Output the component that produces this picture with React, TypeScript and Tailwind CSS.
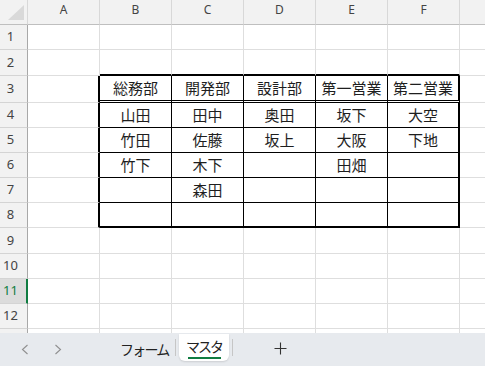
import { Fragment } from 'react'

const columns = ['A', 'B', 'C', 'D', 'E', 'F']
const tableColumns = ['B', 'C', 'D', 'E', 'F']

// master table rows (B..F)
const tableData: Record<number, string[]> = {
  3: ['総務部', '開発部', '設計部', '第一営業', '第二営業'],
  4: ['山田', '田中', '奥田', '坂下', '大空'],
  5: ['竹田', '佐藤', '坂上', '大阪', '下地'],
  6: ['竹下', '木下', '', '田畑', ''],
  7: ['', '森田', '', '', ''],
  8: ['', '', '', '', ''],
}

const rows = [
  { n: 1, h: 'h-[25px]' },
  { n: 2, h: 'h-[26px]' },
  { n: 3, h: 'h-[27px]' },
  { n: 4, h: 'h-[25px]' },
  { n: 5, h: 'h-[25px]' },
  { n: 6, h: 'h-[25px]' },
  { n: 7, h: 'h-[25px]' },
  { n: 8, h: 'h-[25px]' },
  { n: 9, h: 'h-[26px]' },
  { n: 10, h: 'h-[25px]' },
  { n: 11, h: 'h-[25px]' },
  { n: 12, h: 'h-[25px]' },
]

const SELECTED_ROW = 11

function rightBorder(row: number, col: string) {
  const inTable = row >= 3 && row <= 8
  if (inTable && (col === 'A' || col === 'F')) return 'border-r-2 border-r-black'
  if (inTable) return 'border-r border-r-black'
  return 'border-r border-r-[#dedede]'
}

function bottomBorder(row: number, col: string) {
  const tableCol = tableColumns.includes(col)
  if (tableCol && (row === 2 || row === 8)) return 'border-b-2 border-b-black'
  if (tableCol && row === 3) return 'border-b-[3px] border-b-black [border-bottom-style:double]!'
  if (tableCol && row > 3 && row < 8) return 'border-b border-b-black'
  return 'border-b border-b-[#dedede]'
}

function cellText(row: number, col: string) {
  const data = tableData[row]
  if (!data) return ''
  const idx = tableColumns.indexOf(col)
  return idx >= 0 ? data[idx] : ''
}

function Chevron({ dir }: { dir: 'left' | 'right' }) {
  return (
    <svg width="8" height="11" viewBox="0 0 8 11" fill="none">
      <path
        d={dir === 'left' ? 'M6.5 1 L1.5 5.5 L6.5 10' : 'M1.5 1 L6.5 5.5 L1.5 10'}
        stroke="#8f8f8f"
        strokeWidth="1.1"
      />
    </svg>
  )
}

function App() {
  return (
    <div className="flex h-[366px] w-[485px] flex-col overflow-hidden bg-white font-['Noto_Sans','Noto_Sans_CJK_JP',sans-serif]">
      {/* column headers */}
      <div className="flex h-[25px] shrink-0">
        <div className="w-[28px] shrink-0 border-r border-b border-r-[#d8d8d8] border-b-[#bfbfbf] bg-[#f2f2f2]">
          <svg width="27" height="24" viewBox="0 0 27 24">
            <polygon points="24,5 24,20 8,20" fill="#d9d9d9" />
          </svg>
        </div>
        {columns.map((col) => (
          <div
            key={col}
            className="flex w-[72px] shrink-0 items-center justify-center border-r border-b border-r-[#d8d8d8] border-b-[#bfbfbf] bg-[#f2f2f2] pb-[5px] text-[12px] text-[#444]"
          >
            {col}
          </div>
        ))}
        <div className="flex-1 border-b border-b-[#bfbfbf] bg-[#f2f2f2]" />
      </div>

      {rows.map(({ n, h }) => (
        <div key={n} className={`flex shrink-0 ${h}`}>
          <div
            className={
              n === SELECTED_ROW
                ? 'flex w-[28px] shrink-0 items-center justify-center border-r-2 border-b border-r-[#107c41] border-b-[#d4d4d4] bg-[#dcdcdc] pr-[5px] text-[13px] text-[#107c41]'
                : 'flex w-[28px] shrink-0 items-center justify-center border-r border-b border-r-[#a8a8a8] border-b-[#d4d4d4] bg-[#f2f2f2] pr-[6px] text-[13px] text-[#444]'
            }
          >
            {n}
          </div>
          {columns.map((col) => (
            <Fragment key={col}>
              <div
                className={`flex w-[72px] shrink-0 items-center justify-center text-[15px] text-[#1e1e1e] font-['Noto_Sans_CJK_JP',sans-serif] ${rightBorder(n, col)} ${bottomBorder(n, col)}`}
              >
                {cellText(n, col)}
              </div>
            </Fragment>
          ))}
          <div className="flex-1 border-b border-b-[#dedede]" />
        </div>
      ))}

      {/* partial row 13 */}
      <div className="flex h-[4px] shrink-0">
        <div className="w-[28px] shrink-0 border-r border-r-[#a8a8a8] bg-[#f2f2f2]" />
        {columns.map((col) => (
          <div key={col} className="w-[72px] shrink-0 border-r border-r-[#dedede]" />
        ))}
      </div>

      {/* sheet tabs */}
      <div className="flex h-[33px] shrink-0 items-start bg-[#e7eaee] font-['Noto_Sans_CJK_JP',sans-serif]">
        <div className="ml-[21px] mt-[11px]">
          <Chevron dir="left" />
        </div>
        <div className="ml-[25px] mt-[11px]">
          <Chevron dir="right" />
        </div>
        <div className="ml-[58px] mt-[6px] w-[42px] whitespace-nowrap text-[14px] tracking-[-1.8px] text-[#222]">フォーム</div>
        <div className="ml-[13px] mt-[6px] h-[17px] w-px bg-[#c6c6c6]" />
        <div className="ml-[3px] mt-px flex h-[27px] w-[50px] flex-col items-center rounded-b-[6px] bg-white shadow-[0_1px_2px_rgba(0,0,0,0.12)]">
          <span className="mt-[4px] whitespace-nowrap text-[14px] leading-[17px] tracking-[-2px] text-[#222]">マスタ</span>
          <span className="mt-[2px] h-[2px] w-[33px] bg-[#107c41]" />
        </div>
        <div className="ml-[3px] mt-[6px] h-[17px] w-px bg-[#c6c6c6]" />
        <div className="ml-[41px] mt-[9px]">
          <svg width="13" height="13" viewBox="0 0 13 13">
            <path d="M6.5 0.5 V12.5 M0.5 6.5 H12.5" stroke="#333" strokeWidth="1.1" />
          </svg>
        </div>
      </div>
    </div>
  )
}

export default App
